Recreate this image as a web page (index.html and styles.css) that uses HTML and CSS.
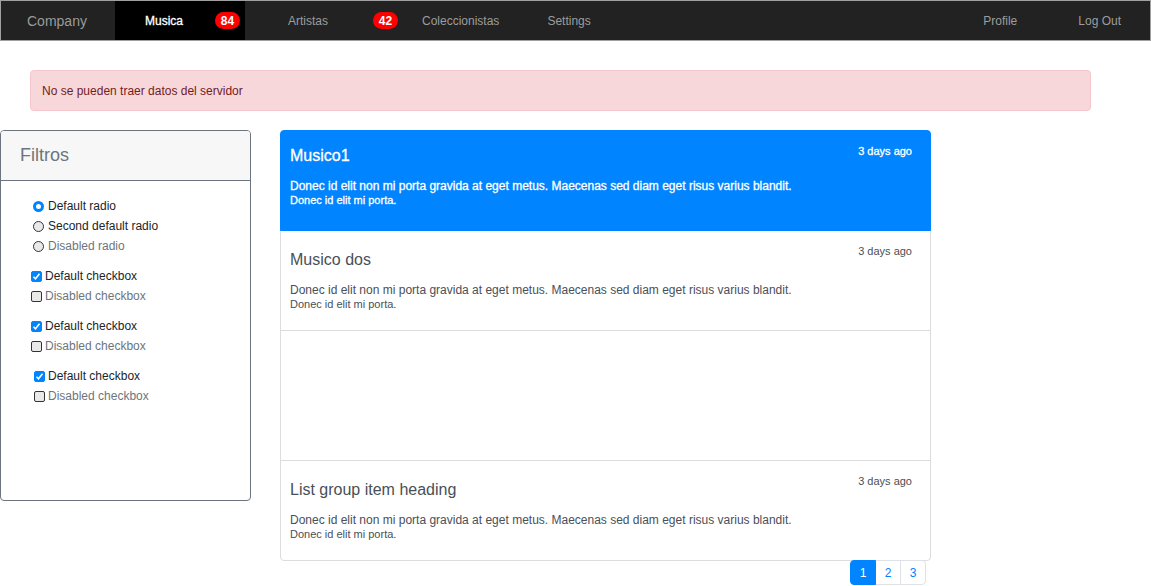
FILE: index.html
```html
<!DOCTYPE html>
<html lang="es">
<head>
<meta charset="utf-8">
<title>Musica</title>
<link rel="stylesheet" href="styles.css">
</head>
<body>
<nav class="navbar">
  <a class="brand">Company</a>
  <div class="nav-item nav-musica active"><span>Musica</span><span class="badge">84</span></div>
  <div class="nav-item nav-artistas"><span>Artistas</span><span class="badge">42</span></div>
  <div class="nav-item nav-colec">Coleccionistas</div>
  <div class="nav-item nav-settings">Settings</div>
  <div class="nav-item nav-profile">Profile</div>
  <div class="nav-item nav-logout">Log Out</div>
</nav>

<div class="alert">No se pueden traer datos del servidor</div>

<div class="content">
  <aside class="card">
    <div class="card-header">Filtros</div>
    <div class="card-body">
      <div class="group radios">
        <label class="row"><input type="radio" name="r" checked><span>Default radio</span></label>
        <label class="row"><input type="radio" name="r"><span>Second default radio</span></label>
        <label class="row disabled"><input type="radio" name="r" disabled><span>Disabled radio</span></label>
      </div>
      <div class="group checks">
        <label class="row"><input type="checkbox" checked><span>Default checkbox</span></label>
        <label class="row disabled"><input type="checkbox" disabled><span>Disabled checkbox</span></label>
      </div>
      <div class="group checks">
        <label class="row"><input type="checkbox" checked><span>Default checkbox</span></label>
        <label class="row disabled"><input type="checkbox" disabled><span>Disabled checkbox</span></label>
      </div>
      <div class="group checks indent">
        <label class="row"><input type="checkbox" checked><span>Default checkbox</span></label>
        <label class="row disabled"><input type="checkbox" disabled><span>Disabled checkbox</span></label>
      </div>
    </div>
  </aside>

  <section class="main">
    <div class="list-group">
      <div class="item active">
        <div class="item-top"><h5>Musico1</h5><small>3 days ago</small></div>
        <p>Donec id elit non mi porta gravida at eget metus. Maecenas sed diam eget risus varius blandit.</p>
        <small class="sub">Donec id elit mi porta.</small>
      </div>
      <div class="item">
        <div class="item-top"><h5>Musico dos</h5><small>3 days ago</small></div>
        <p>Donec id elit non mi porta gravida at eget metus. Maecenas sed diam eget risus varius blandit.</p>
        <small class="sub">Donec id elit mi porta.</small>
      </div>
      <div class="item empty"></div>
      <div class="item">
        <div class="item-top"><h5>List group item heading</h5><small>3 days ago</small></div>
        <p>Donec id elit non mi porta gravida at eget metus. Maecenas sed diam eget risus varius blandit.</p>
        <small class="sub">Donec id elit mi porta.</small>
      </div>
    </div>
    <ul class="pagination">
      <li class="page active">1</li>
      <li class="page">2</li>
      <li class="page">3</li>
    </ul>
  </section>
</div>
</body>
</html>
```

FILE: styles.css
```css
* { box-sizing: border-box; }
html, body { margin: 0; padding: 0; }
body {
  font-family: "Liberation Sans", Arial, sans-serif;
  font-size: 12px;
  color: #212529;
  background: #fff;
  width: 1151px;
  height: 586px;
  overflow: hidden;
}

/* navbar */
.navbar {
  display: flex;
  align-items: stretch;
  height: 41px;
  background: #222;
  border: 1px solid #a0a0a0;
  padding-left: 26px;
  padding-right: 29px;
}
.brand {
  display: flex;
  align-items: center;
  font-size: 14px;
  color: #9a9a9a;
  width: 60px;
  margin-right: 28px;
}
.nav-item {
  display: flex;
  align-items: center;
  font-size: 12px;
  color: #9d9d9d;
}
.nav-musica {
  width: 130px;
  padding: 0 5px 0 30px;
  justify-content: space-between;
}
.nav-musica.active {
  background: #000;
  color: #fff;
  -webkit-text-stroke: 0.3px #fff;
}
.nav-artistas {
  width: 153px;
  padding-left: 43px;
  justify-content: space-between;
}
.nav-colec { margin-left: 24px; }
.nav-settings { margin-left: 48px; }
.nav-profile { margin-left: auto; }
.nav-logout { margin-left: 61px; }
.badge {
  display: inline-flex;
  align-items: center;
  justify-content: center;
  width: 25px;
  height: 17px;
  border-radius: 9px;
  background: #f00;
  color: #fff;
  font-weight: bold;
  font-size: 12px;
  -webkit-text-stroke: 0;
}

/* alert */
.alert {
  margin: 29px 0 0 30px;
  width: 1061px;
  height: 41px;
  padding: 0 11px;
  display: flex;
  align-items: center;
  background: #f8d7da;
  border: 1px solid #f5c6cb;
  border-radius: 4px;
  color: #721c24;
  font-size: 12px;
}

/* content */
.content {
  display: flex;
  align-items: flex-start;
  gap: 29px;
  margin-top: 19px;
}
.card {
  width: 251px;
  height: 371px;
  border: 1px solid #6c757d;
  border-radius: 4px;
  overflow: hidden;
}
.card-header {
  height: 50px;
  background: #f7f7f7;
  border-bottom: 1px solid #6c757d;
  padding-left: 19px;
  display: flex;
  align-items: center;
  font-size: 18px;
  color: #6c757d;
}
.card-body {
  padding: 15px 0 0 30px;
}
.group { display: flex; flex-direction: column; margin-bottom: 10px; }
.row {
  display: flex;
  align-items: center;
  height: 20px;
  font-size: 12px;
  color: #212529;
}
.row.disabled { color: #6c757d; }
.row input {
  -webkit-appearance: none;
  appearance: none;
  flex: none;
  background: #e9e9e9;
  border: 1px solid #333;
}
.radios input {
  width: 11px; height: 11px;
  border-radius: 50%;
  margin: 0 4px 0 2px;
}
.radios input:checked {
  background: #fff;
  border: 3px solid #0084ff;
}
.checks input {
  width: 11px; height: 11px;
  border-radius: 2px;
  margin: 0 3px 0 0;
}
.checks input:checked {
  background: #0084ff url("data:image/svg+xml,%3Csvg xmlns='http://www.w3.org/2000/svg' viewBox='0 0 11 11'%3E%3Cpath d='M2.5 5.8 L4.5 7.8 L8.5 2.8' fill='none' stroke='%23fff' stroke-width='1.6'/%3E%3C/svg%3E") no-repeat center / 11px 11px;
  border-color: #0084ff;
}
.checks.indent { padding-left: 3px; }

/* list */
.main { width: 651px; display: flex; flex-direction: column; align-items: flex-end; }
.list-group {
  width: 651px;
  display: flex;
  flex-direction: column;
}
.item {
  height: 101px;
  padding: 12px 18px 0 9px;
  color: #495057;
  border: 1px solid #dcdcdc;
  margin-top: -1px;
}
.item:first-child { margin-top: 0; border-radius: 4px 4px 0 0; }
.item:last-child { border-radius: 0 0 4px 4px; }
.item.active {
  background: #0084ff;
  border-color: #0084ff;
  color: #fff;
  -webkit-text-stroke: 0.3px #fff;
  height: 101px;
  position: relative;
}
.item.empty { height: 131px; }
.item-top {
  display: flex;
  justify-content: space-between;
  align-items: flex-start;
}
.item-top h5 {
  margin: 7px 0 0;
  font-size: 16px;
  line-height: 19px;
  font-weight: normal;
}
.item.active .item-top h5 { margin-top: 3px; }
.item-top small {
  font-size: 11px;
  line-height: 16px;
}
.item p {
  margin: 14px 0 0;
  font-size: 12px;
  line-height: 14px;
}
.sub {
  display: block;
  font-size: 11px;
  line-height: 14px;
}

.pagination {
  display: flex;
  list-style: none;
  margin: -1px 5px 0 0;
  padding: 0;
}
.page {
  width: 26px;
  height: 25px;
  display: flex;
  align-items: center;
  justify-content: center;
  border: 1px solid #dee2e6;
  margin-left: -1px;
  color: #0084ff;
  font-size: 12px;
  background: #fff;
}
.page:first-child { border-radius: 4px 0 0 4px; }
.page:last-child { border-radius: 0 4px 4px 0; }
.page.active {
  background: #0084ff;
  border-color: #0084ff;
  color: #fff;
  position: relative;
}
```
